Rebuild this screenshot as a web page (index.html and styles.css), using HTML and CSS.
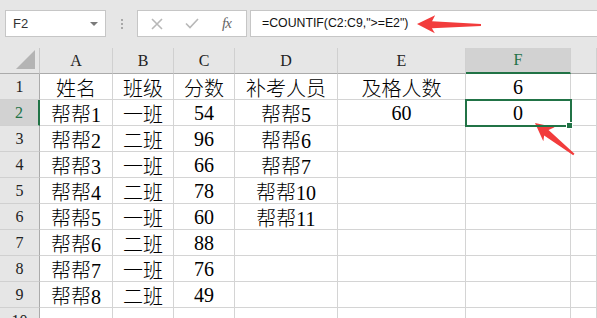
FILE: index.html
```html
<!DOCTYPE html>
<html lang="zh-CN">
<head>
    <meta charset="UTF-8">
    <title>COUNTIF</title>
    <link rel="stylesheet" href="styles.css">
</head>
<body>
    <div class="toolbar">
        <div class="name-box">
            <span>F2</span>
            <span class="caret"></span>
        </div>
        <div class="grip"><i></i><i></i><i></i></div>
        <div class="fn-box">
            <svg class="btn-cancel" width="12" height="12" viewBox="0 0 12 12">
                <path d="M1 1 L11 11 M11 1 L1 11" />
            </svg>
            <svg class="btn-ok" width="14" height="11" viewBox="0 0 14 11">
                <path d="M1 5.5 L5 9.5 L13 1" />
            </svg>
            <span class="btn-fx">fx</span>
        </div>
        <div class="formula">=COUNTIF(C2:C9,"&gt;=E2")</div>
    </div>

    <div class="sheet">
        <div class="corner"><span class="tri"></span></div>
        <div class="col-head">A</div>
        <div class="col-head">B</div>
        <div class="col-head">C</div>
        <div class="col-head">D</div>
        <div class="col-head">E</div>
        <div class="col-head active">F</div>
        <div class="col-head"></div>

        <div class="row-head">1</div>
        <div class="cell">姓名</div><div class="cell">班级</div><div class="cell">分数</div><div class="cell">补考人员</div><div class="cell">及格人数</div><div class="cell">6</div><div class="cell"></div>

        <div class="row-head active">2</div>
        <div class="cell">帮帮1</div><div class="cell">一班</div><div class="cell">54</div><div class="cell">帮帮5</div><div class="cell">60</div><div class="cell selected">0</div><div class="cell"></div>

        <div class="row-head">3</div>
        <div class="cell">帮帮2</div><div class="cell">二班</div><div class="cell">96</div><div class="cell">帮帮6</div><div class="cell"></div><div class="cell"></div><div class="cell"></div>

        <div class="row-head">4</div>
        <div class="cell">帮帮3</div><div class="cell">一班</div><div class="cell">66</div><div class="cell">帮帮7</div><div class="cell"></div><div class="cell"></div><div class="cell"></div>

        <div class="row-head">5</div>
        <div class="cell">帮帮4</div><div class="cell">二班</div><div class="cell">78</div><div class="cell">帮帮10</div><div class="cell"></div><div class="cell"></div><div class="cell"></div>

        <div class="row-head">6</div>
        <div class="cell">帮帮5</div><div class="cell">一班</div><div class="cell">60</div><div class="cell">帮帮11</div><div class="cell"></div><div class="cell"></div><div class="cell"></div>

        <div class="row-head">7</div>
        <div class="cell">帮帮6</div><div class="cell">二班</div><div class="cell">88</div><div class="cell"></div><div class="cell"></div><div class="cell"></div><div class="cell"></div>

        <div class="row-head">8</div>
        <div class="cell">帮帮7</div><div class="cell">一班</div><div class="cell">76</div><div class="cell"></div><div class="cell"></div><div class="cell"></div><div class="cell"></div>

        <div class="row-head">9</div>
        <div class="cell">帮帮8</div><div class="cell">二班</div><div class="cell">49</div><div class="cell"></div><div class="cell"></div><div class="cell"></div><div class="cell"></div>

        <div class="row-head">10</div>
        <div class="cell"></div><div class="cell"></div><div class="cell"></div><div class="cell"></div><div class="cell"></div><div class="cell"></div><div class="cell"></div>
    </div>

    <!-- red call-out arrows drawn over the sheet -->
    <svg class="arrows" width="597" height="318" viewBox="0 0 597 318">
        <polygon points="0,0 18,-9 15,-3 64,-1 64,1 15,4 18,9" transform="translate(417 24) rotate(1)" />
        <polygon points="0,0 18,-9 15,-3 50,-1 50,1 15,4 18,9" transform="translate(535 123) rotate(39)" />
    </svg>
</body>
</html>
```

FILE: styles.css
```css
body {
    margin: 0;
    width: 597px;
    height: 318px;
    overflow: hidden;
    background-color: #e6e6e6;
    font-family: "Liberation Serif", "Noto Sans CJK SC", serif;
    position: relative;
}

/* Formula bar */
.toolbar {
    display: flex;
    align-items: flex-start;
    height: 48px;
    padding-top: 10px;
    box-sizing: border-box;
    font-family: "Liberation Sans", "Noto Sans CJK SC", sans-serif;
}

.name-box {
    display: flex;
    align-items: center;
    justify-content: space-between;
    margin-left: 5px;
    width: 101px;
    height: 27px;
    box-sizing: border-box;
    padding: 0 7px 0 7px;
    background-color: #ffffff;
    border: 1px solid #c6c6c6;
    font-size: 13px;
    color: #333;
}

.caret {
    width: 0;
    height: 0;
    border-left: 4px solid transparent;
    border-right: 4px solid transparent;
    border-top: 4px solid #7a7a7a;
}

.grip {
    width: 31px;
    height: 27px;
    display: flex;
    flex-direction: column;
    align-items: center;
    justify-content: center;
    gap: 2px;
}

.grip i {
    width: 2px;
    height: 2px;
    background-color: #a8a8a8;
}

.fn-box {
    display: flex;
    align-items: center;
    width: 110px;
    height: 27px;
    box-sizing: border-box;
    background-color: #ffffff;
    border: 1px solid #c6c6c6;
}

.fn-box svg {
    fill: none;
    stroke: #b8b8b8;
    stroke-width: 1.6;
}

.btn-cancel {
    margin-left: 13px;
}

.btn-ok {
    margin-left: 22px;
    stroke: #c4c4c4;
    stroke-width: 2;
}

.btn-fx {
    margin-left: 23px;
    font-family: "Liberation Serif", serif;
    font-style: italic;
    font-size: 15px;
    color: #666;
    letter-spacing: -1px;
}

.formula {
    margin-left: 3px;
    flex: 1;
    height: 27px;
    box-sizing: border-box;
    padding-left: 11px;
    line-height: 25px;
    background-color: #ffffff;
    border: 1px solid #c6c6c6;
    border-right: none;
    font-size: 12.3px;
    color: #111;
}

/* Sheet grid */
.sheet {
    display: grid;
    grid-template-columns: 40px 73px 61px 61px 103px 128px 105px 1fr;
    grid-auto-rows: 26px;
    background-color: #ffffff;
}

.sheet > div {
    box-sizing: border-box;
    display: flex;
    align-items: center;
    justify-content: center;
}

.cell {
    border-right: 1px solid #d4d4d4;
    border-bottom: 1px solid #d4d4d4;
    font-size: 20px;
    font-weight: 300;
    color: #000;
    padding-top: 1px;
    white-space: nowrap;
}

.corner {
    background-color: #e6e6e6;
    border-right: 1px solid #c8c8c8;
    border-bottom: 1px solid #ababab;
    position: relative;
}

.tri {
    position: absolute;
    right: 4px;
    bottom: 4px;
    width: 0;
    height: 0;
    border-left: 19px solid transparent;
    border-bottom: 19px solid #b4b4b4;
}

.col-head {
    background-color: #e6e6e6;
    border-right: 1px solid #d0d0d0;
    border-bottom: 1px solid #ababab;
    font-size: 16px;
    color: #222;
}

.col-head.active {
    background-color: #d2d2d2;
    color: #217346;
    border-bottom: 2px solid #217346;
}

.row-head {
    background-color: #e6e6e6;
    border-right: 1px solid #ababab;
    border-bottom: 1px solid #d0d0d0;
    font-size: 16px;
    color: #222;
}

.row-head.active {
    background-color: #d2d2d2;
    color: #217346;
    border-right: 2px solid #217346;
}

.cell.selected {
    position: relative;
    z-index: 1;
    outline: 2px solid #217346;
    outline-offset: -1px;
}

.cell.selected::after {
    content: "";
    position: absolute;
    right: -3px;
    bottom: -4px;
    width: 5px;
    height: 5px;
    background-color: #217346;
    border: 1px solid #ffffff;
}

.arrows {
    position: absolute;
    top: 0;
    left: 0;
    pointer-events: none;
    fill: #f23c3c;
}
```
